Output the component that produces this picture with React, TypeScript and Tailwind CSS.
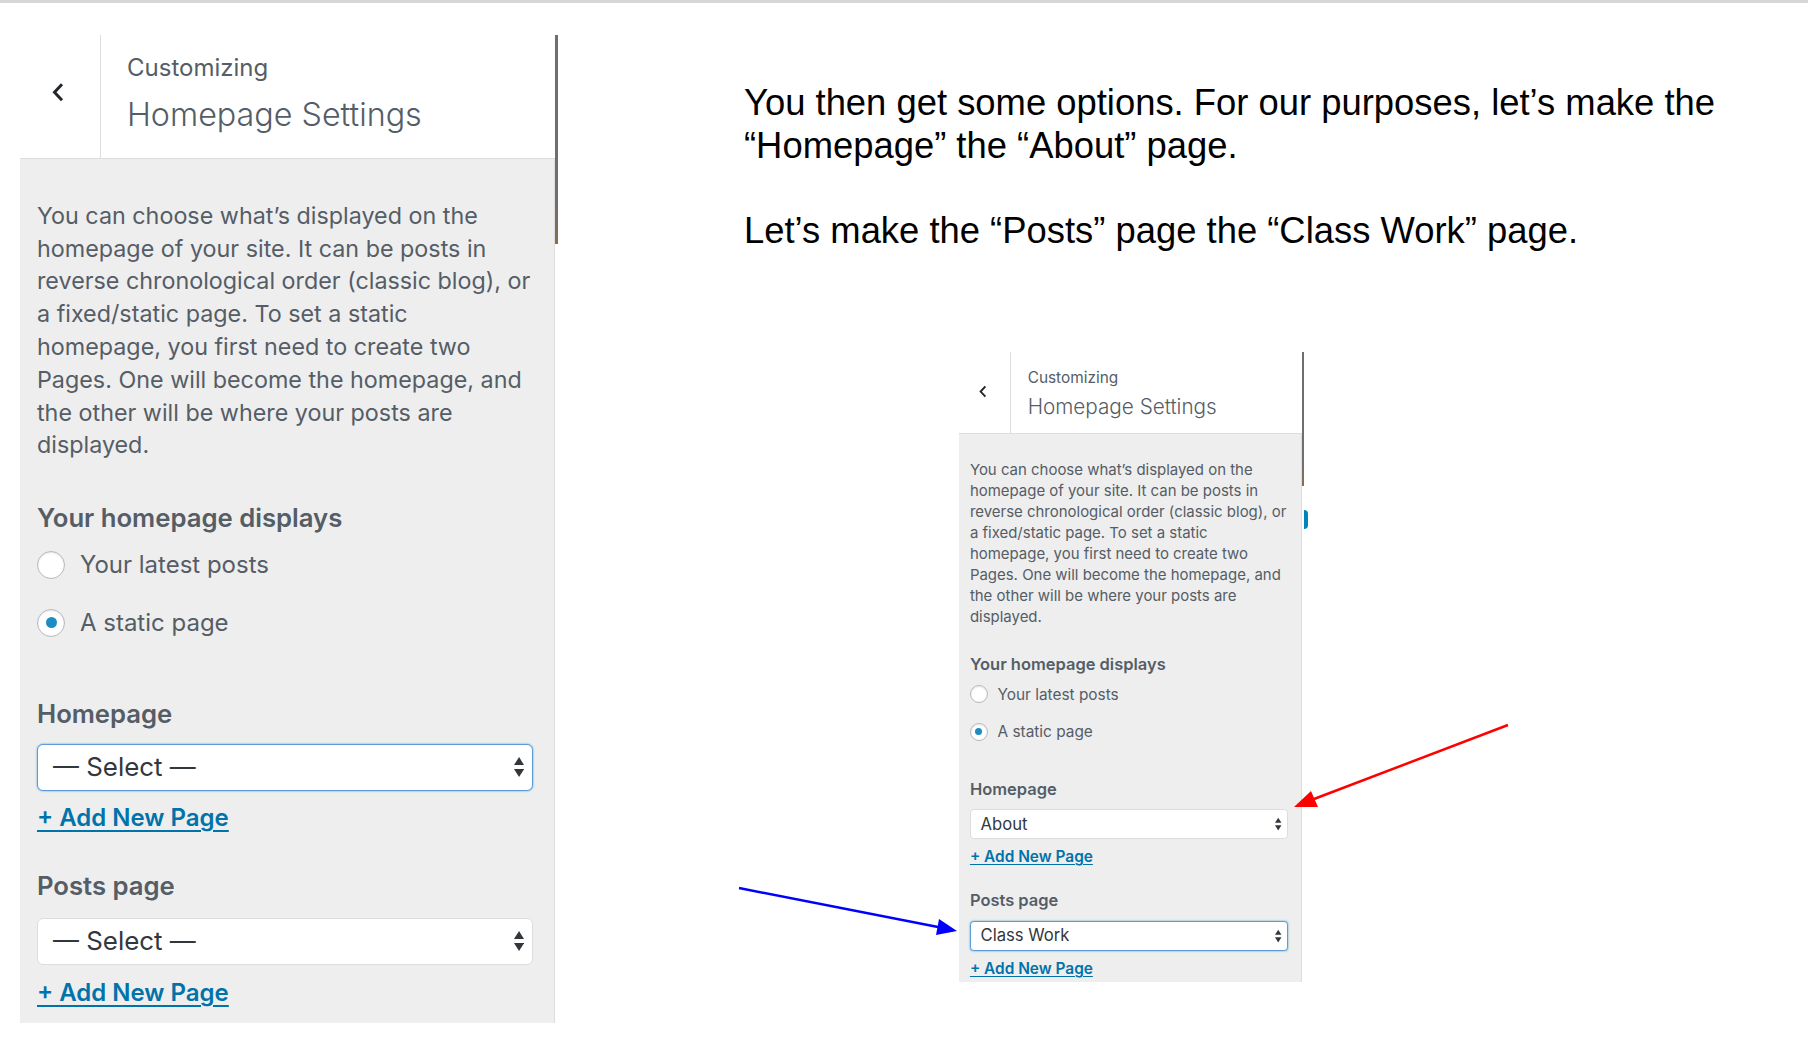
import React from "react";

const DESCRIPTION = [
  "You can choose what’s displayed on the",
  "homepage of your site. It can be posts in",
  "reverse chronological order (classic blog), or",
  "a fixed/static page. To set a static",
  "homepage, you first need to create two",
  "Pages. One will become the homepage, and",
  "the other will be where your posts are",
  "displayed.",
];

function Chevron() {
  return (
    <svg className="h-[0.85em] w-[0.5em]" viewBox="0 0 12 20">
      <path d="M10 2 2.5 10l7.5 8" fill="none" stroke="#23282d" strokeWidth="3" />
    </svg>
  );
}

function UpDown() {
  return (
    <svg className="h-[0.92em] w-[0.42em]" viewBox="0 0 10 22">
      <path d="M0 9 5 1l5 8z" fill="#32373c" />
      <path d="M0 13h10l-5 8z" fill="#32373c" />
    </svg>
  );
}

function Radio({ label, checked }: { label: string; checked?: boolean }) {
  return (
    <div className="flex h-[1.25em] items-center gap-[0.62em]">
      <span className="flex h-[1.17em] w-[1.17em] items-center justify-center rounded-full border border-[#b4b9be] bg-white shadow-[inset_0_1px_2px_rgba(0,0,0,0.1)]">
        {checked && <span className="h-[0.46em] w-[0.46em] rounded-full bg-[#1e8cbe]" />}
      </span>
      <span>{label}</span>
    </div>
  );
}

function SelectBox({ value, focused }: { value: string; focused?: boolean }) {
  return (
    <div
      className={`flex h-[1.96em] items-center justify-between rounded-[0.25em] border bg-white pl-[0.625em] pr-[0.32em] text-[#32373c] ${
        focused ? "border-[#5b9dd9] shadow-[0_0_2px_rgba(30,140,190,0.8)]" : "border-[#dddddd]"
      }`}
    >
      <span className="text-[1.08em]">{value}</span>
      <UpDown />
    </div>
  );
}

function ControlTitle({ children, className = "" }: { children: React.ReactNode; className?: string }) {
  return (
    <div className={`h-[1.25em] leading-[1.25em] ${className}`}>
      <span className="text-[1.07em] font-semibold">{children}</span>
    </div>
  );
}

function AddLink({ className = "" }: { className?: string }) {
  return (
    <div className={`h-[1.25em] leading-[1.25em] ${className}`}>
      <a href="#" className="text-[1em] font-semibold text-[#0073aa] underline underline-offset-[0.15em]">
        + Add New Page
      </a>
    </div>
  );
}

function CustomizerPanel({
  size,
  homepage,
  postsPage,
  focusPosts,
  bubble,
}: {
  size: "large" | "small";
  homepage: string;
  postsPage: string;
  focusPosts?: boolean;
  bubble?: boolean;
}) {
  const large = size === "large";
  return (
    <div
      className={`relative flex items-start text-[#555d66] [font-family:Inter,'Noto_Sans',sans-serif] ${
        large ? "text-[24px]" : "text-[15.4px]"
      }`}
    >
      <div className="w-[22.3em]">
        <header className={`flex border-b border-[#dddddd] bg-white ${large ? "h-[5.167em]" : "h-[5.32em]"}`}>
          <div
            className={`flex w-[3.375em] justify-center border-r border-[#dddddd] pr-[0.15em] ${
              large ? "pt-[1.96em]" : "pt-[2.15em]"
            }`}
          >
            <Chevron />
          </div>
          <div className={`pl-[1.083em] ${large ? "pt-[0.75em]" : "pt-[1.01em]"}`}>
            <div className="h-[1.25em] leading-[1.25em]">Customizing</div>
            <div className="mt-[0.4em] h-[1.85em] leading-[1.85em]">
              <span className="text-[1.345em] font-light">Homepage Settings</span>
            </div>
          </div>
        </header>

        <div
          className={`border-r border-[#dddddd] bg-[#eeeeee] pl-[0.708em] pr-[0.88em] pt-[1.7em] ${
            large ? "pb-[0.625em]" : "pb-[0.2em]"
          }`}
        >
          <p className="whitespace-nowrap text-[0.972em] leading-[1.406em]">
            {DESCRIPTION.map((line, index) => (
              <React.Fragment key={index}>
                {line}
                {index < DESCRIPTION.length - 1 && <br />}
              </React.Fragment>
            ))}
          </p>

          <ControlTitle className="mt-[1.7em]">Your homepage displays</ControlTitle>
          <div className="mt-[0.708em]">
            <Radio label="Your latest posts" />
          </div>
          <div className="mt-[1.167em]">
            <Radio label="A static page" checked />
          </div>

          <ControlTitle className="mt-[2.54em]">Homepage</ControlTitle>
          <div className="mt-[0.625em]">
            <SelectBox value={homepage} focused={!focusPosts} />
          </div>
          <AddLink className="mt-[0.5em]" />

          <ControlTitle className="mt-[1.583em]">Posts page</ControlTitle>
          <div className="mt-[0.708em]">
            <SelectBox value={postsPage} focused={focusPosts} />
          </div>
          <AddLink className="mt-[0.54em]" />
        </div>
      </div>

      <div className="h-[8.7em] w-[0.12em] bg-gradient-to-b from-[#6f6f6f] via-[#6f6f6f] via-80% to-[#8c6c4c]" />

      {bubble && (
        <span className="absolute left-[22.42em] top-[10.1em] h-[1.5em] w-[0.4em] rounded-r-full border-2 border-l-0 border-white bg-[#0085ba]" />
      )}
    </div>
  );
}

function Arrows() {
  return (
    <svg className="pointer-events-none absolute left-0 top-0" width="1808" height="1052" viewBox="0 0 1808 1052">
      <line x1="1508" y1="725" x2="1314" y2="799" stroke="#ff0000" strokeWidth="2.5" />
      <path d="M1294 807 1311 791 1318 807z" fill="#ff0000" />
      <line x1="739" y1="888" x2="938" y2="927" stroke="#0000ff" strokeWidth="2.5" />
      <path d="M957 931 936 935 939 919z" fill="#0000ff" />
    </svg>
  );
}

export default function App() {
  return (
    <div className="relative h-[1052px] overflow-hidden bg-white">
      <div className="h-[3px] bg-[#d6d6d6]" />
      <div className="flex">
        <div className="w-[744px] shrink-0 pl-[20px] pt-[32px]">
          <CustomizerPanel size="large" homepage="— Select —" postsPage="— Select —" />
        </div>

        <div className="pt-[79px]">
          <div className="whitespace-nowrap text-[36.4px] leading-[42.5px] text-black [font-family:'Liberation_Sans',Arial,sans-serif]">
            <p>
              You then get some options. For our purposes, let’s make the
              <br />
              “Homepage” the “About” page.
            </p>
            <p className="mt-[42.5px]">Let’s make the “Posts” page the “Class Work” page.</p>
          </div>

          <div className="ml-[215px] mt-[100px]">
            <CustomizerPanel size="small" homepage="About" postsPage="Class Work" focusPosts bubble />
          </div>
        </div>
      </div>
      <Arrows />
    </div>
  );
}
